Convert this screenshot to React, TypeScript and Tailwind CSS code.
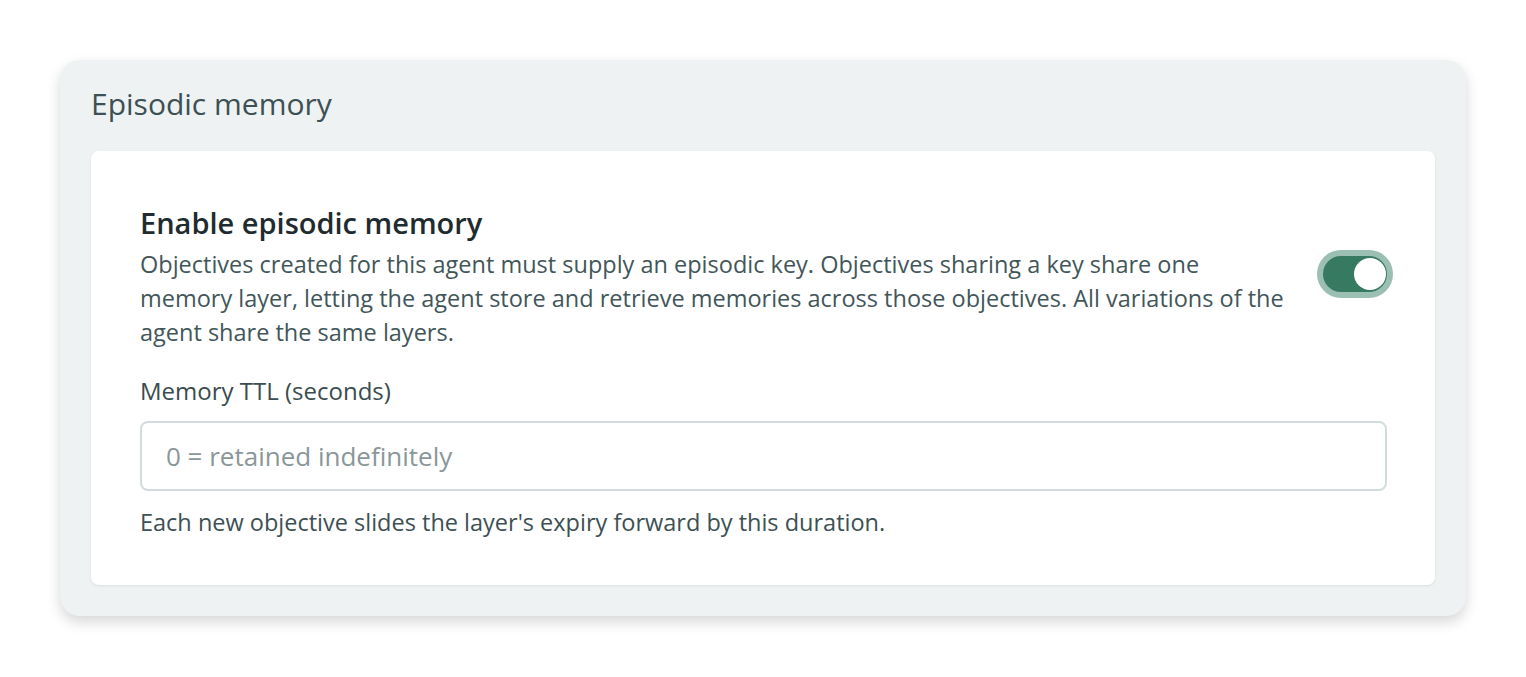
import React from "react";

export default function App() {
  return (
    <div className="w-[1526px] h-[677px] bg-white pt-[60px] px-[60px]" style={{ fontFamily: "'Open Sans', 'Noto Sans', sans-serif" }}>
      <div className="w-[1406px] h-[556px] rounded-[20px] bg-[#eef2f3] shadow-[0_6px_14px_rgba(0,0,0,0.16)] pt-[26px] px-[31px]">
        <h2 className="text-[30px] leading-[36px] text-[#3d5053] font-medium">Episodic memory</h2>
        <div className="mt-[29px] w-[1344px] h-[434px] bg-white rounded-[8px] shadow-[0_1px_3px_rgba(0,0,0,0.08)] pl-[49px] pr-[42px] pt-[54px]">
          <div className="flex items-start justify-between">
            <div className="w-[1150px]">
              <div className="text-[29px] leading-[36px] font-semibold text-[#1f2c2f]">Enable episodic memory</div>
              <p className="text-[23.5px] leading-[34px] text-[#42565a] mt-[6px]">
                Objectives created for this agent must supply an episodic key. Objectives sharing a key share one memory layer, letting the agent store and retrieve memories across those objectives. All variations of the agent share the same layers.
              </p>
            </div>
            <div className="mt-[45px] w-[76px] h-[48px] rounded-full bg-[#9bbfb3] p-[6px]">
              <div className="w-full h-full rounded-full bg-[#367a62] flex items-center justify-end pr-[1px]">
                <div className="w-[32px] h-[32px] rounded-full bg-white" />
              </div>
            </div>
          </div>
          <div className="mt-[28px] text-[24px] leading-[28px] font-medium text-[#3a4c4f]">Memory TTL (seconds)</div>
          <div className="mt-[16px] w-[1247px] h-[70px] rounded-[8px] border-2 border-[#d3dcdc] flex items-center pl-[24px]">
            <span className="text-[26px] text-[#8a9799]">0 = retained indefinitely</span>
          </div>
          <div className="mt-[17px] text-[23.5px] leading-[28px] text-[#3d5053]">Each new objective slides the layer's expiry forward by this duration.</div>
        </div>
      </div>
    </div>
  );
}
